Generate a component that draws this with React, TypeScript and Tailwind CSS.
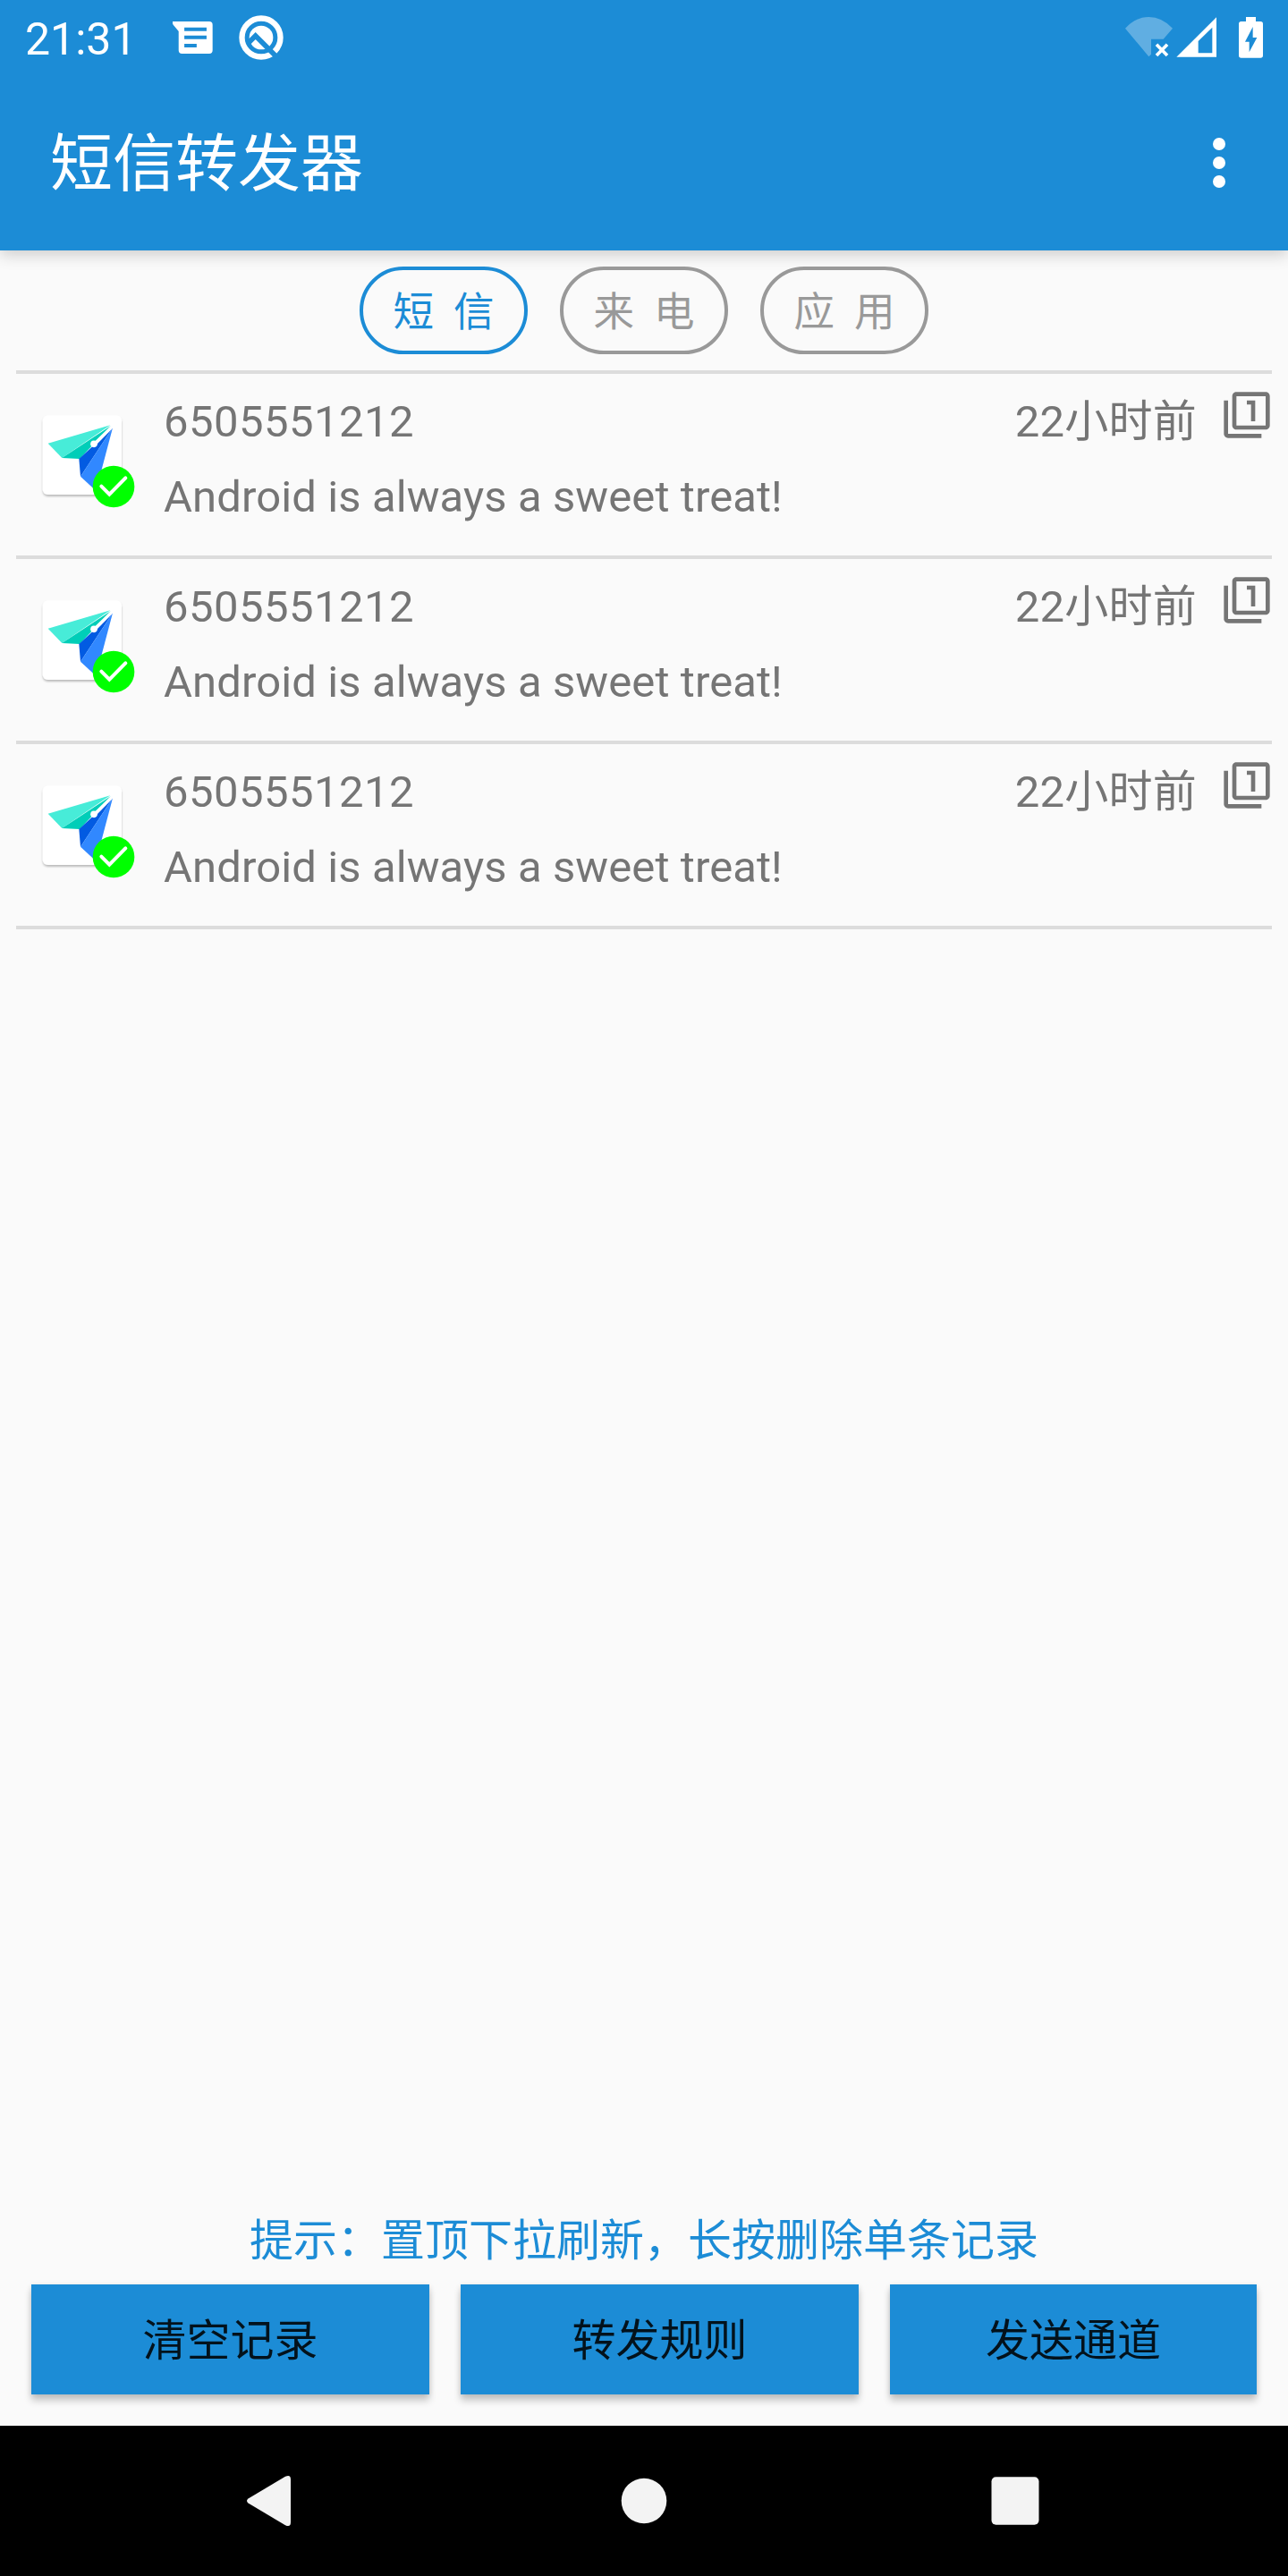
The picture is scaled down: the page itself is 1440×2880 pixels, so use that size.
const FONT = "font-['Roboto','Noto_Sans_CJK_SC',sans-serif]";

function MessageIcon() {
  return (
    <svg className="ml-[40px] h-[36px] w-[45px]" viewBox="580 73 134 107" preserveAspectRatio="none" fill="#fff">
      <path
        fillRule="evenodd"
        d="M580 73H702Q713 73 713 84V169Q713 180 702 180H611Q600 180 600 169V106L582 84Q577 76 580 73ZM619 93V105H693V93ZM619 120V132H693V120ZM619 147V159H660V147Z"
      />
    </svg>
  );
}

function QIcon() {
  return (
    <svg className="ml-[29px] h-[50px] w-[50px]" viewBox="802 51 150 150" fill="none">
      <circle cx="877" cy="126" r="64.5" stroke="#fff" strokeWidth="19" />
      <circle cx="877" cy="126" r="40" fill="#fff" />
      <path d="M832 146L858 120L940 202" stroke="#1c8cd6" strokeWidth="17" />
    </svg>
  );
}

function StatusIcons() {
  return (
    <svg className="h-[84px] w-[160px]" viewBox="165 0 480 252" fill="#fff">
      <path opacity=".3" d="M174 95Q209 57 253 57T333 95L302 131H261V182L253 190Z" />
      <path d="M279 149L315 186M315 149L279 186" stroke="#fff" strokeWidth="11" />
      <path fillRule="evenodd" d="M346 191L480 58V191ZM419 178H466V92L419 138Z" />
      <path
        fillRule="evenodd"
        d="M579 57H612V72H628Q636 72 636 80V186Q636 194 628 194H563Q555 194 555 186V80Q555 72 563 72H579ZM602 90L576 140H590V175L616 126H602Z"
      />
    </svg>
  );
}

function PlaneIcon() {
  return (
    <svg className="h-[130px] w-[140px]" viewBox="0 0 420 390">
      <defs>
        <filter id="card" x="-10%" y="-10%" width="120%" height="125%">
          <feDropShadow dx="0" dy="6" stdDeviation="3.5" floodColor="#000" floodOpacity=".25" />
        </filter>
      </defs>
      <rect x="53" y="43" width="265" height="266" rx="18" fill="#fff" filter="url(#card)" />
      <path d="M71 137L280 76L118 186Z" fill="#47ecd8" />
      <path d="M118 186L282 78L177 189Z" fill="#00ceb8" />
      <path d="M175 189L288 85L180 248Z" fill="#025be2" />
      <path d="M180 248L288 85L232 296Z" fill="#3188ff" />
      <path d="M221 137L282 78L288 86L231 144Z" fill="#fff" />
      <circle cx="225" cy="139" r="11.5" fill="#fff" />
      <circle cx="291" cy="282" r="70" fill="#0f0" />
      <path d="M250 281L277 308L331 253" fill="none" stroke="#fff" strokeWidth="12" strokeLinecap="round" />
    </svg>
  );
}

function SimOneIcon() {
  return (
    <svg className="mt-[18px] ml-[28px] h-14 w-14 shrink-0" viewBox="0 0 24 24" fill="#757575">
      <path d="M3 5H1v16c0 1.1.9 2 2 2h16v-2H3V5zm11 10h2V5h-4v2h2v8zm7-14H7c-1.1 0-2 .9-2 2v14c0 1.1.9 2 2 2h14c1.1 0 2-.9 2-2V3c0-1.1-.9-2-2-2zm0 16H7V3h14v14z" />
    </svg>
  );
}

const tabs = [
  { chars: ["短", "信"], active: true },
  { chars: ["来", "电"], active: false },
  { chars: ["应", "用"], active: false },
];

const records = [1, 2, 3].map((id) => ({
  id,
  from: "6505551212",
  content: "Android is always a sweet treat!",
  time: "22小时前",
}));

const actions = [
  { label: "清空记录", width: "w-[445px]" },
  { label: "转发规则", width: "w-[445px]" },
  { label: "发送通道", width: "w-[410px]" },
];

export default function App() {
  return (
    <div className={`flex h-[2880px] w-[1440px] flex-col overflow-hidden bg-[#fafafa] text-[49px] leading-[58px] ${FONT}`}>
      <header className="h-[280px] shrink-0 bg-[#1c8cd6] text-white shadow-[0_5px_16px_rgba(0,0,0,0.18)]">
        <div className="flex h-[84px] items-center justify-between pr-[25px] pl-[28px]">
          <div className="flex items-center">
            <span className="pt-[3px] text-[50px]">21:31</span>
            <MessageIcon />
            <QIcon />
          </div>
          <StatusIcons />
        </div>
        <div className="flex h-[196px] items-center justify-between pr-[70px] pl-[56px]">
          <h1 className="pt-1 text-[70px] leading-[82px]">短信转发器</h1>
          <div className="flex flex-col gap-[7px]">
            <i className="size-[14px] rounded-full bg-white" />
            <i className="size-[14px] rounded-full bg-white" />
            <i className="size-[14px] rounded-full bg-white" />
          </div>
        </div>
      </header>

      <nav className="flex shrink-0 justify-center gap-9 pt-[18px] pb-[18px]">
        {tabs.map((t) => (
          <button
            key={t.chars[0]}
            className={`flex h-[98px] w-[188px] items-center justify-center gap-[22px] rounded-full border-4 pt-[6px] text-[45.5px] leading-[54px] ${
              t.active ? "border-[#1c8cd6] text-[#1c8cd6]" : "border-[#999] text-[#999]"
            }`}
          >
            <span>{t.chars[0]}</span>
            <span>{t.chars[1]}</span>
          </button>
        ))}
      </nav>

      <main className="mx-[18px] flex-1 border-t-4 border-[#dcdcdc] text-[#757575]">
        {records.map((r) => (
          <article key={r.id} className="flex h-[207px] border-b-4 border-[#dcdcdc]">
            <div className="w-[165px] pt-[32px] pl-[12px]">
              <PlaneIcon />
            </div>
            <div className="flex flex-1 flex-col gap-[26px] pt-[25px]">
              <div className="flex justify-between">
                <span className="tracking-[0.45px]">{r.from}</span>
                <span className="tracking-[0.25px]">{r.time}</span>
              </div>
              <p className="tracking-[0.1px]">{r.content}</p>
            </div>
            <SimOneIcon />
          </article>
        ))}
      </main>

      <p className="shrink-0 pb-[19px] text-center text-[#1c8cd6]">提示：置顶下拉刷新，长按删除单条记录</p>
      <div className="mb-[35px] flex shrink-0 gap-[35px] px-[35px]">
        {actions.map((a) => (
          <button
            key={a.label}
            className={`h-[123px] bg-[#1c8cd6] pt-1 text-black/87 shadow-[0_7px_8px_rgba(0,0,0,0.2),0_1px_6px_rgba(0,0,0,0.1)] ${a.width}`}
          >
            {a.label}
          </button>
        ))}
      </div>

      <footer className="h-[168px] shrink-0 bg-black">
        <svg className="h-[168px] w-[1440px]" viewBox="0 2712 1440 168" fill="#f3f3f3">
          <path d="M277.500 2793.500L319 2768.800Q325 2766 325 2772V2820Q325 2826 319 2823.200L277.500 2798.500Q274.500 2796 277.500 2793.500Z" />
          <circle cx="720" cy="2796" r="25.300" />
          <rect x="1108.500" y="2769.300" width="53" height="53.500" rx="5" />
        </svg>
      </footer>
    </div>
  );
}
